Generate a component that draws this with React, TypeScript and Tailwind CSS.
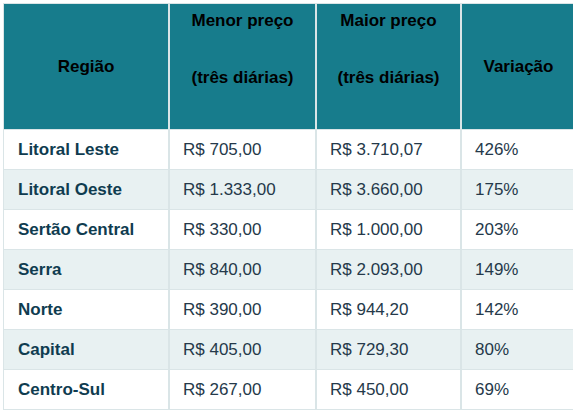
import React from "react";

type Row = {
  regiao: string;
  menor: string;
  maior: string;
  variacao: string;
};

const rows: Row[] = [
  { regiao: "Litoral Leste", menor: "R$ 705,00", maior: "R$ 3.710,07", variacao: "426%" },
  { regiao: "Litoral Oeste", menor: "R$ 1.333,00", maior: "R$ 3.660,00", variacao: "175%" },
  { regiao: "Sertão Central", menor: "R$ 330,00", maior: "R$ 1.000,00", variacao: "203%" },
  { regiao: "Serra", menor: "R$ 840,00", maior: "R$ 2.093,00", variacao: "149%" },
  { regiao: "Norte", menor: "R$ 390,00", maior: "R$ 944,20", variacao: "142%" },
  { regiao: "Capital", menor: "R$ 405,00", maior: "R$ 729,30", variacao: "80%" },
  { regiao: "Centro-Sul", menor: "R$ 267,00", maior: "R$ 450,00", variacao: "69%" },
];

const HeaderCell = ({ lines }: { lines: string[] }) => {
  if (lines.length === 1) {
    return (
      <div className="bg-[#177c8c] flex items-center justify-center font-bold text-black">
        {lines[0]}
      </div>
    );
  }
  return (
    <div className="bg-[#177c8c] flex flex-col items-center pt-[7px] gap-[37px] font-bold text-black">
      {lines.map((l) => (
        <p key={l}>{l}</p>
      ))}
    </div>
  );
};

const App = () => {
  return (
    <div className="w-[573px] h-[415px] overflow-hidden bg-white pl-[3px] pt-[3px] font-['Liberation_Sans',Arial,sans-serif] text-[17px] leading-[20px]">
      <div className="w-[572px] grid grid-cols-[164px_145px_143px_113px] grid-rows-[125px_repeat(7,39px)] gap-x-[2px] gap-y-[1px] bg-[#dae5e7] border-l border-t border-b border-[#dae5e7]">
        <HeaderCell lines={["Região"]} />
        <HeaderCell lines={["Menor preço", "(três diárias)"]} />
        <HeaderCell lines={["Maior preço", "(três diárias)"]} />
        <HeaderCell lines={["Variação"]} />
        {rows.map((r, i) => {
          const bg = i % 2 === 1 ? "bg-[#e8f1f2]" : "bg-white";
          return (
            <React.Fragment key={r.regiao}>
              <div className={`${bg} flex items-center pl-[14px] font-bold text-[#0f3c50]`}>
                {r.regiao}
              </div>
              <div className={`${bg} flex items-center pl-[13px] text-[#25394a]`}>{r.menor}</div>
              <div className={`${bg} flex items-center pl-[13px] text-[#25394a]`}>{r.maior}</div>
              <div className={`${bg} flex items-center pl-[13px] text-[#25394a]`}>{r.variacao}</div>
            </React.Fragment>
          );
        })}
      </div>
    </div>
  );
};

export default App;
